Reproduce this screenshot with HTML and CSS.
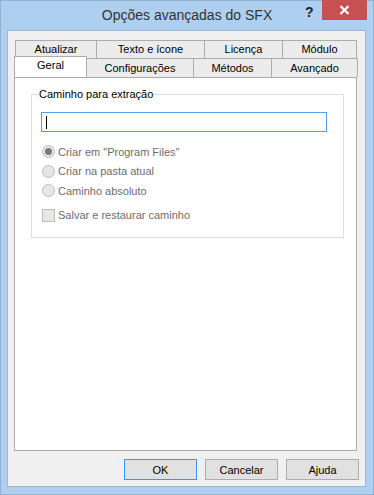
FILE: index.html
```html
<!DOCTYPE html>
<html lang="pt">
<head>
<meta charset="utf-8">
<link rel="stylesheet" href="styles.css">
</head>
<body>
<div class="window">
  <div class="titlebar">
    <div class="title">Opções avançadas do SFX</div>
    <div class="help">?</div>
    <div class="close">
      <svg width="11" height="10" viewBox="0 0 11 10"><path d="M1.5 1 L9.5 9 M9.5 1 L1.5 9" stroke="#fff" stroke-width="2.2" fill="none"/></svg>
    </div>
  </div>
  <div class="client">
    <div class="tabs">
      <div class="tabrow back">
        <div class="tab w1">Atualizar</div>
        <div class="tab w2">Texto e ícone</div>
        <div class="tab w3">Licença</div>
        <div class="tab w4">Módulo</div>
      </div>
      <div class="tabrow front">
        <div class="tab sel">Geral</div>
        <div class="tab w6">Configurações</div>
        <div class="tab w7">Métodos</div>
        <div class="tab w8">Avançado</div>
      </div>
    </div>
    <div class="panel">
      <fieldset class="group">
        <legend>Caminho para extração</legend>
        <div class="input"><span class="caret"></span></div>
        <div class="opt first"><span class="radio on"></span>Criar em "Program Files"</div>
        <div class="opt"><span class="radio"></span>Criar na pasta atual</div>
        <div class="opt"><span class="radio"></span>Caminho absoluto</div>
        <div class="opt chk"><span class="check"></span>Salvar e restaurar caminho</div>
      </fieldset>
    </div>
    <div class="buttons">
      <div class="btn def">OK</div>
      <div class="btn">Cancelar</div>
      <div class="btn">Ajuda</div>
    </div>
  </div>
</div>
</body>
</html>
```
FILE: styles.css
```css
* { box-sizing: border-box; }
html, body { margin: 0; padding: 0; }
body { width: 374px; height: 495px; overflow: hidden; font-family: "Liberation Sans", Arial, sans-serif; font-size: 11px; color: #000; }
.window { width: 374px; height: 495px; background: #aecff0; border: 1px solid #8fb2d4; display: flex; flex-direction: column; }
.titlebar { height: 29px; position: relative; }
.title { position: absolute; left: 0; right: 0; top: 6px; text-align: center; font-size: 14px; color: #333; }
.help { position: absolute; left: 304px; top: 3px; font-weight: bold; font-size: 14px; color: #222; }
.close { position: absolute; left: 321px; top: -1px; width: 45px; height: 20px; background: #c75050; display: flex; align-items: center; justify-content: center; }
.client { margin: 0 7px 7px 6px; flex: 1; background: #f0f0f0; border: 1px solid #9cb8d3; display: flex; flex-direction: column; padding: 9px 8px 0 6px; }
.tabs { display: flex; flex-direction: column; height: 37px; }
.tabrow { display: flex; height: 18px; }
.tabrow.back { padding-left: 1px; }
.tab { height: 18px; background: #ececec; border: 1px solid #acacac; border-bottom: none; display: flex; align-items: center; justify-content: center; margin-right: -1px; line-height: 1; }
.w1 { width: 82px; } .w2 { width: 109px; } .w3 { width: 79px; } .w4 { width: 75px; }
.w6 { width: 108px; } .w7 { width: 79px; } .w8 { width: 87px; }
.front .tab { height: 19px; }
.front .tab.sel { width: 73px; height: 21px; margin-top: -2px; background: #fff; position: relative; z-index: 1; padding-bottom: 3px; }
.panel { height: 374px; background: #fff; border: 1px solid #acacac; padding: 10px 12px 0 16px; }
.group { margin: 0; border: 1px solid #dcdcdc; padding: 8px 16px 0 9px; height: 150px; }
.group legend { padding: 0 1px; margin-left: -3px; color: #000; }
.input { height: 20px; border: 1px solid #569de5; background: #fff; margin-top: 4px; display: flex; align-items: center; padding-left: 4px; }
.caret { width: 1px; height: 13px; background: #000; }
.opt { display: flex; align-items: center; color: #6d6d6d; height: 19.5px; }
.opt.first { margin-top: 10px; }
.radio { width: 13px; height: 13px; border-radius: 50%; border: 1px solid #bcbcbc; background: #e6e6e6; margin: 0 3px 0 1px; display: flex; align-items: center; justify-content: center; }
.radio.on::after { content: ""; width: 7px; height: 7px; border-radius: 50%; background: #7a7a7a; }
.opt.chk { margin-top: 5px; height: 19px; }
.check { width: 13px; height: 13px; border: 1px solid #bcbcbc; background: #e6e6e6; margin: 0 3px 0 1px; }
.buttons { display: flex; justify-content: flex-end; gap: 8px; margin: 8px -2px 0 0; }
.btn { width: 73px; height: 21px; border: 1px solid #adadad; background: #e1e1e1; display: flex; align-items: center; justify-content: center; }
.btn.def { border-color: #3399ff; }
```
